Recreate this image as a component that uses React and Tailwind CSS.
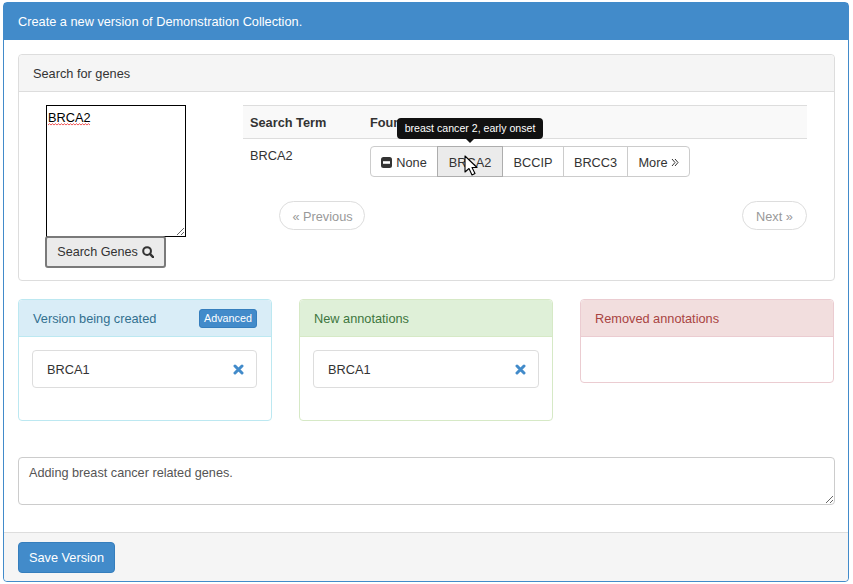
import React from "react";

const FONT = "font-['Liberation_Sans',Arial,sans-serif]";

function Remove() {
  return (
    <svg width="11" height="11" viewBox="0 0 11 11" className="text-[#428bca] -ml-[1px]">
      <path d="M2 2 L9 9 M9 2 L2 9" stroke="currentColor" strokeWidth="3" strokeLinecap="round" />
    </svg>
  );
}

function Column({ head, border, title, action, children }) {
  return (
    <div className={`bg-white border rounded ${border.outer}`}>
      <div className={`h-[37px] pl-[14px] pr-[14px] pt-[1px] flex items-center justify-between border-b rounded-t ${head} ${border.inner} ${title}`}>
        {action}
      </div>
      {children}
    </div>
  );
}

function Item({ right }) {
  return (
    <div className={`ml-[13px] mt-[13px] mb-[32px] h-[38px] border border-[#ddd] rounded pl-[14px] pr-[12px] pt-[1px] flex items-center justify-between text-[#333] ${right}`}>
      <span>BRCA1</span>
      <Remove />
    </div>
  );
}

export default function App() {
  return (
    <div className={`${FONT} w-[853px] h-[584px] bg-white text-[14px] text-[#333] pt-[2px] pl-[3px] overflow-hidden`}>
      <div className="w-[846px] h-[580px] border border-[#428bca] rounded flex flex-col">
        <div className="h-[37px] bg-[#428bca] text-white flex items-center px-[14px] leading-[20px] text-[12.75px] shrink-0">
          Create a new version of Demonstration Collection.
        </div>

        <div className="flex-1 px-[14px] pt-[14px]">
          <div className="border border-[#ddd] rounded h-[227px] w-[817px]">
            <div className="h-[37px] bg-[#f5f5f5] border-b border-[#ddd] px-[14px] pt-[1px] flex items-center text-[12.75px] rounded-t">
              Search for genes
            </div>
            <div className="flex pt-[13px]">
              <div className="w-[224px] pl-[27px] shrink-0">
                <div className="relative w-[140px] h-[132px]">
                  <textarea
                    readOnly
                    spellCheck={false}
                    defaultValue="BRCA2"
                    className="block w-[140px] h-[132px] border border-black bg-white text-black text-[12.75px] leading-[15px] px-[1px] pt-[4px] outline-none"
                  />
                  <svg width="42" height="3" viewBox="0 0 42 3" className="absolute left-[2px] top-[18px]">
                    <path d="M0 2 L1.5 0.7 L3 2 L4.5 0.7 L6 2 L7.5 0.7 L9 2 L10.5 0.7 L12 2 L13.5 0.7 L15 2 L16.5 0.7 L18 2 L19.5 0.7 L21 2 L22.5 0.7 L24 2 L25.5 0.7 L27 2 L28.5 0.7 L30 2 L31.5 0.7 L33 2 L34.5 0.7 L36 2 L37.5 0.7 L39 2 L40.5 0.7 L42 2" fill="none" stroke="#e44" strokeWidth="0.9" />
                  </svg>
                </div>
                <button className="-ml-[1px] -mt-[1px] relative w-[121px] h-[32px] bg-[#ebebeb] border-2 border-[#7a7a7a] rounded-[3px] flex items-center justify-center gap-[4px] text-[#333] text-[12.6px]">
                  Search Genes
                  <svg width="12" height="12" viewBox="0 0 13 13" fill="none" stroke="#333" strokeWidth="2.2">
                    <circle cx="5.5" cy="5.5" r="4.2" />
                    <path d="M8.6 8.6 L12 12" strokeLinecap="round" strokeWidth="2.6" />
                  </svg>
                </button>
              </div>

              <div className="w-[564px]">
                <div className="relative">
                  <div className="h-[34px] bg-[#f9f9f9] border-y border-[#ddd] pt-[1px] flex items-center font-bold text-[12.75px]">
                    <div className="w-[127px] pl-[7px]">Search Term</div>
                    <div>Found</div>
                  </div>
                  <div className="flex">
                    <div className="w-[127px] pl-[7px] pt-[8px] text-[12.75px] leading-[18px]">BRCA2</div>
                    <div className="relative mt-[7px] h-[31px] flex text-[12.75px] text-[#333]">
                      <div className="absolute left-[27px] -top-[28px] z-10 h-[21px] pt-[1px] w-[146px] bg-[#111] text-white text-[10.6px] rounded-[4px] flex items-center justify-center whitespace-nowrap">
                        breast cancer 2, early onset
                        <span className="absolute left-1/2 -ml-[4px] -bottom-[4px] border-x-[4px] border-x-transparent border-t-[4px] border-t-[#111]" />
                      </div>
                      <div className="w-[68px] pt-[2px] border border-[#ccc] rounded-l flex items-center justify-center gap-[4px]">
                        <svg width="11" height="11" viewBox="0 0 11 11">
                          <rect width="11" height="11" rx="2.5" fill="#333" />
                          <rect x="2" y="4.2" width="7" height="2.6" fill="#fff" />
                        </svg>
                        None
                      </div>
                      <div className="relative w-[66px] pt-[2px] -ml-px bg-[#ebebeb] border border-[#adadad] flex items-center justify-center">
                        BRCA2
                        <svg width="14" height="22" viewBox="0 0 14 22" className="absolute left-[26px] top-[8px]">
                          <path d="M1 1 L1 17 L5 13.5 L8 20 L11 18.5 L8 12.5 L13 12.5 Z" fill="#fff" stroke="#000" strokeWidth="1.1" strokeLinejoin="round" />
                        </svg>
                      </div>
                      <div className="w-[62px] pt-[2px] -ml-px border border-[#ccc] flex items-center justify-center">BCCIP</div>
                      <div className="w-[65px] pt-[2px] -ml-px border border-[#ccc] flex items-center justify-center">BRCC3</div>
                      <div className="w-[63px] pt-[2px] -ml-px border border-[#ccc] rounded-r flex items-center justify-center gap-[3px]">
                        More
                        <svg width="8" height="9" viewBox="0 0 8 9" fill="none" stroke="#333" strokeWidth="1">
                          <path d="M1 1 L4 4.5 L1 8 M4 1 L7 4.5 L4 8" />
                        </svg>
                      </div>
                    </div>
                  </div>
                </div>
                <div className="flex justify-between pl-[36px] mt-[24px] text-[12.75px] text-[#999]">
                  <div className="w-[86px] h-[29px] pt-[2px] pl-[1px] border border-[#ddd] rounded-full flex items-center justify-center">« Previous</div>
                  <div className="w-[65px] h-[29px] pt-[2px] border border-[#ddd] rounded-full flex items-center justify-center">Next »</div>
                </div>
              </div>
            </div>
          </div>

          <div className="grid grid-cols-3 gap-[27px] w-[816px] mt-[18px] items-start text-[12.75px]">
            <Column
              head="bg-[#d9edf7]"
              border={{ outer: "border-[#bce8f1]", inner: "border-[#bce8f1]" }}
              title="text-[#31708f]"
              action={
                <>
                  <span>Version being created</span>
                  <span className="h-[19px] w-[58px] bg-[#428bca] border border-[#357ebd] rounded-[3px] text-white text-[10.75px] flex items-center justify-center">Advanced</span>
                </>
              }
            >
              <Item right="mr-[14px]" />
            </Column>
            <Column
              head="bg-[#dff0d8]"
              border={{ outer: "border-[#d6e9c6]", inner: "border-[#d6e9c6]" }}
              title="text-[#3c763d]"
              action={<span>New annotations</span>}
            >
              <Item right="mr-[13px]" />
            </Column>
            <Column
              head="bg-[#f2dede]"
              border={{ outer: "border-[#ebccd1]", inner: "border-[#ebccd1]" }}
              title="text-[#a94442]"
              action={<span>Removed annotations</span>}
            >
              <div className="h-[45px]" />
            </Column>
          </div>

          <textarea
            readOnly
            defaultValue="Adding breast cancer related genes."
            className="block mt-[36px] w-[817px] h-[48px] border border-[#ccc] rounded px-[10px] py-[6px] text-[12.7px] leading-[18px] text-[#555] outline-none"
          />
        </div>

        <div className="h-[49px] shrink-0 bg-[#f5f5f5] border-t border-[#ddd] px-[14px] flex items-center rounded-b">
          <button className="w-[97px] h-[31px] pt-[2px] bg-[#428bca] border border-[#357ebd] rounded text-white text-[12.75px]">Save Version</button>
        </div>
      </div>
    </div>
  );
}
